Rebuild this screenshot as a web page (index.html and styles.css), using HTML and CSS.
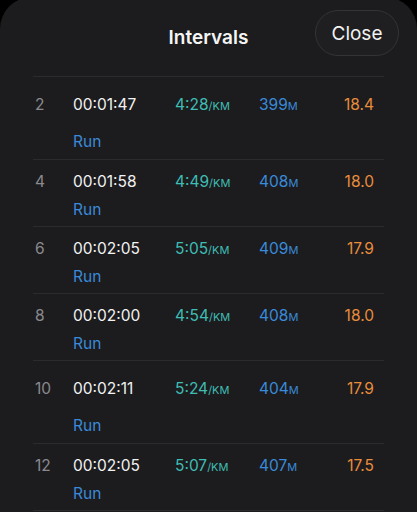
FILE: index.html
```html
<!DOCTYPE html>
<html lang="en">
<head>
    <meta charset="UTF-8">
    <meta name="viewport" content="width=device-width, initial-scale=1.0">
    <title>Intervals</title>
    <link rel="stylesheet" href="styles.css">
</head>
<body>
    <div class="sheet">
        <div class="sheet-header">
            <h1>Intervals</h1>
            <button class="close-btn">Close</button>
        </div>
        <div class="interval-list">
            <div class="interval tall">
                <span class="num">2</span>
                <span class="time">00:01:47</span>
                <span class="pace">4:28<small>/KM</small></span>
                <span class="dist">399<small>M</small></span>
                <span class="value">18.4</span>
                <span class="type">Run</span>
            </div>
            <div class="interval">
                <span class="num">4</span>
                <span class="time">00:01:58</span>
                <span class="pace">4:49<small>/KM</small></span>
                <span class="dist">408<small>M</small></span>
                <span class="value">18.0</span>
                <span class="type">Run</span>
            </div>
            <div class="interval">
                <span class="num">6</span>
                <span class="time">00:02:05</span>
                <span class="pace">5:05<small>/KM</small></span>
                <span class="dist">409<small>M</small></span>
                <span class="value">17.9</span>
                <span class="type">Run</span>
            </div>
            <div class="interval">
                <span class="num">8</span>
                <span class="time">00:02:00</span>
                <span class="pace">4:54<small>/KM</small></span>
                <span class="dist">408<small>M</small></span>
                <span class="value">18.0</span>
                <span class="type">Run</span>
            </div>
            <div class="interval tall">
                <span class="num">10</span>
                <span class="time">00:02:11</span>
                <span class="pace">5:24<small>/KM</small></span>
                <span class="dist">404<small>M</small></span>
                <span class="value">17.9</span>
                <span class="type">Run</span>
            </div>
            <div class="interval">
                <span class="num">12</span>
                <span class="time">00:02:05</span>
                <span class="pace">5:07<small>/KM</small></span>
                <span class="dist">407<small>M</small></span>
                <span class="value">17.5</span>
                <span class="type">Run</span>
            </div>
        </div>
    </div>
</body>
</html>
```

FILE: styles.css
```css
body {
    margin: 0;
    background-color: #000;
    font-family: Inter, "Open Sans", sans-serif;
    color: #f2f2f2;
    overflow: hidden;
}
.sheet {
    margin-top: -3px;
    height: 520px;
    background-color: #1c1c1e;
    border-radius: 32px 32px 0 0;
}
.sheet-header {
    height: 79px;
    display: flex;
    align-items: center;
    justify-content: center;
    position: relative;
}
.sheet-header h1 {
    margin: 0;
    font-size: 19px;
    font-weight: 600;
    color: #f5f5f5;
    padding-top: 2px;
}
.close-btn {
    position: absolute;
    right: 18px;
    top: 13px;
    width: 84px;
    height: 46px;
    border-radius: 23px;
    background-color: #1f1f21;
    border: 1px solid #343436;
    color: #f2f2f2;
    font-family: inherit;
    font-size: 19px;
    padding: 0;
}
.interval-list {
    margin: 0 33px;
    border-top: 1px solid #2b2b2d;
}
.interval {
    display: grid;
    grid-template-columns: 38px 102px 84px 1fr auto;
    grid-template-rows: 22px 22px;
    row-gap: 6px;
    align-items: center;
    padding: 10px 10px 6px 2px;
    border-bottom: 1px solid #2b2b2d;
    font-size: 15.5px;
}
.interval.tall {
    padding-top: 16px;
    padding-bottom: 7px;
    row-gap: 15px;
}
.num {
    color: #8a8a8e;
}
.time {
    color: #f2f2f2;
}
.pace {
    color: #3fbdb4;
}
.dist {
    color: #3a8ada;
}
.pace small,
.dist small {
    font-size: 11px;
}
.value {
    color: #e98c3c;
    text-align: right;
}
.type {
    grid-column: 2;
    color: #3a8ada;
}
```
